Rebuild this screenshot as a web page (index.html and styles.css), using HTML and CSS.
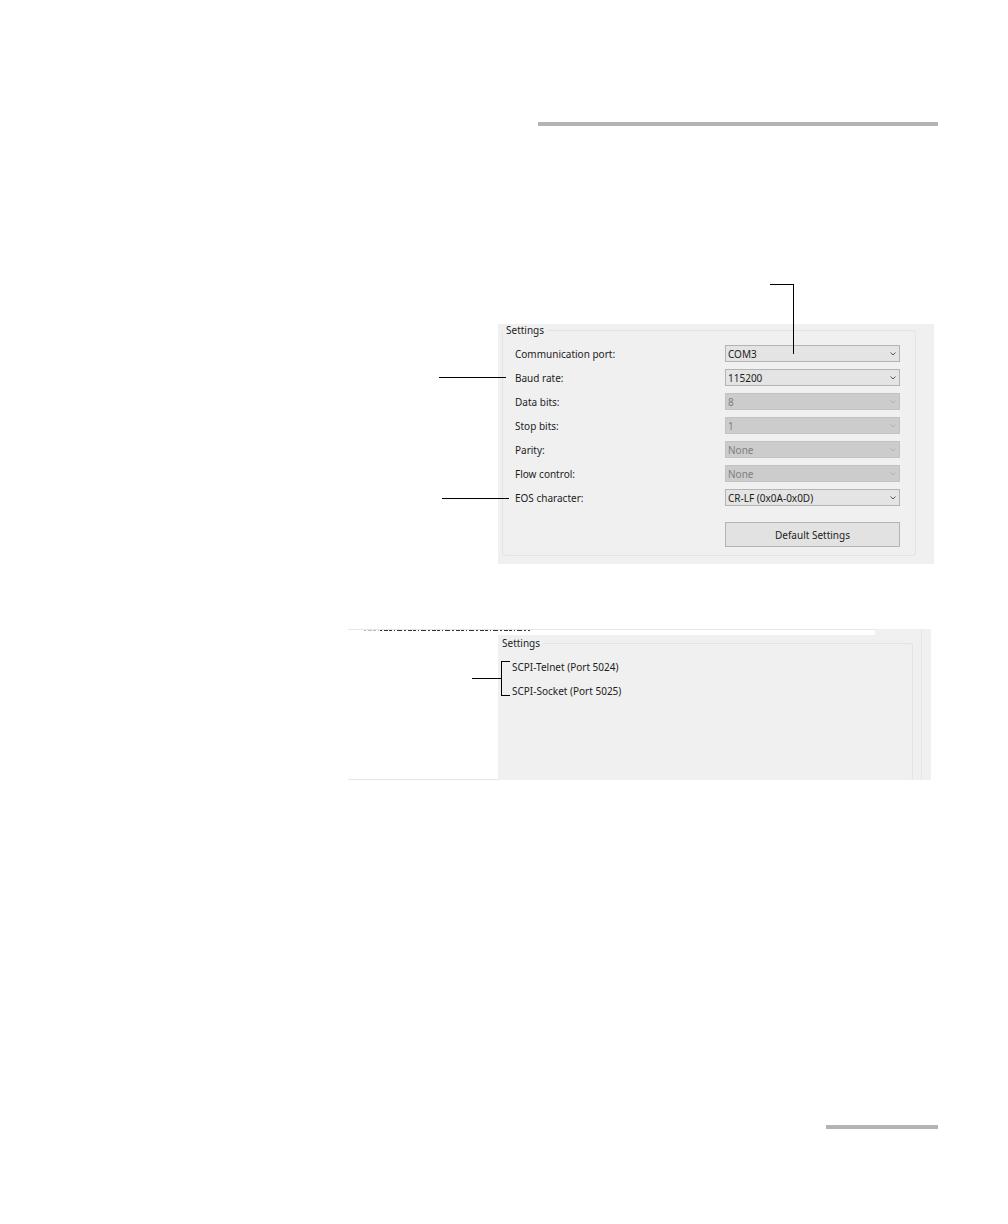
FILE: index.html
```
<!DOCTYPE html>
<html lang="en">
<head>
<meta charset="utf-8">
<title>Communication Settings</title>
<link rel="stylesheet" href="styles.css">
</head>
<body>

<div class="page">

<div class="rule rule-top"></div>

<!-- Serial port settings -->
<form class="panel serial">
    <fieldset class="group">
        <legend>Settings</legend>
        <div class="fields">
            <label for="port">Communication port:</label>
            <div class="combo">
                <select id="port"><option>COM3</option></select>
                <svg class="chevron" viewBox="0 0 6 4"><path d="M0.5 0.5 L3 3 L5.5 0.5"/></svg>
            </div>

            <label for="baud">Baud rate:</label>
            <div class="combo">
                <select id="baud"><option>115200</option></select>
                <svg class="chevron" viewBox="0 0 6 4"><path d="M0.5 0.5 L3 3 L5.5 0.5"/></svg>
            </div>

            <label for="data-bits">Data bits:</label>
            <div class="combo">
                <select id="data-bits" disabled><option>8</option></select>
                <svg class="chevron" viewBox="0 0 6 4"><path d="M0.5 0.5 L3 3 L5.5 0.5"/></svg>
            </div>

            <label for="stop-bits">Stop bits:</label>
            <div class="combo">
                <select id="stop-bits" disabled><option>1</option></select>
                <svg class="chevron" viewBox="0 0 6 4"><path d="M0.5 0.5 L3 3 L5.5 0.5"/></svg>
            </div>

            <label for="parity">Parity:</label>
            <div class="combo">
                <select id="parity" disabled><option>None</option></select>
                <svg class="chevron" viewBox="0 0 6 4"><path d="M0.5 0.5 L3 3 L5.5 0.5"/></svg>
            </div>

            <label for="flow">Flow control:</label>
            <div class="combo">
                <select id="flow" disabled><option>None</option></select>
                <svg class="chevron" viewBox="0 0 6 4"><path d="M0.5 0.5 L3 3 L5.5 0.5"/></svg>
            </div>

            <label for="eos">EOS character:</label>
            <div class="combo">
                <select id="eos"><option>CR-LF (0x0A-0x0D)</option></select>
                <svg class="chevron" viewBox="0 0 6 4"><path d="M0.5 0.5 L3 3 L5.5 0.5"/></svg>
            </div>

            <button type="button" class="defaults">Default Settings</button>
        </div>
    </fieldset>

    <!-- Callout lines -->
    <div class="line line-port"></div>
    <div class="line line-baud"></div>
    <div class="line line-eos"></div>
</form>

<!-- Network settings -->
<div class="network">
    <div class="list-edge">
        <!-- bottom edge of the cut-off list row -->
        <svg class="cut-row" viewBox="0 0 166 2">
            <path class="faint" d="M0 0.5 H18"/>
            <path d="M16 0.5 H166"/>
        </svg>
    </div>
    <div class="network-body">
        <div class="list-blank"></div>
        <fieldset class="group">
            <legend>Settings</legend>
            <p>SCPI-Telnet (Port 5024)</p>
            <p>SCPI-Socket (Port 5025)</p>
        </fieldset>
    </div>
    <div class="line line-ports"></div>
    <div class="line bracket"></div>
</div>

<div class="rule rule-bottom"></div>

</div>

</body>
</html>
```

FILE: styles.css
```
* {
    box-sizing: border-box;
}

body {
    margin: 0;
    background-color: #ffffff;
    color: #1c1c1c;
    font-family: "Noto Sans", Tahoma, sans-serif;
    font-size: 10px;
    line-height: 14px;
}

.page {
    display: flex;
    flex-direction: column;
    min-height: 100vh;
    padding: 122px 70px 95px;
}

.rule {
    height: 4px;
    background-color: #b3b3b3;
    align-self: flex-end;
}

.rule-top {
    width: 400px;
}

.rule-bottom {
    width: 112px;
    margin-top: auto;
}

/* Serial panel */
.panel {
    position: relative;
    margin: 198px 4px 0 428px;
    padding: 0 18px 8px 4px;
    background-color: #f0f0f0;
}

.group {
    min-width: 0;
    margin: 0;
    padding: 0;
    border: 1px solid #e3e3e3;
    border-radius: 3px;
}

legend {
    padding: 0 3px;
    line-height: 12px;
}

.serial .group {
    padding: 9px 15px 8px 12px;
}

.serial legend {
    margin-left: -12px;
}

.fields {
    display: grid;
    grid-template-columns: 1fr 175px;
    row-gap: 7px;
    align-items: center;
}

.combo {
    position: relative;
    height: 17px;
}

select {
    display: block;
    width: 100%;
    height: 17px;
    padding: 0 2px;
    appearance: none;
    background-color: #e4e4e4;
    border: 1px solid #b4b4b4;
    border-radius: 0;
    color: #1c1c1c;
    font: inherit;
}

select:disabled {
    background-color: #cccccc;
    border-color: #c2c2c2;
    color: #808080;
    opacity: 1;
}

.chevron {
    position: absolute;
    top: 7px;
    right: 4px;
    width: 6px;
    height: 4px;
    fill: none;
    stroke: #555555;
    pointer-events: none;
}

select:disabled + .chevron {
    stroke: #b0b0b0;
}

.defaults {
    grid-column: 2;
    height: 25px;
    margin-top: 9px;
    background-color: #e2e2e2;
    border: 1px solid #b4b4b4;
    color: #1c1c1c;
    font: inherit;
}

/* Network panel */
.network {
    position: relative;
    margin: 65px 7px 0 278px;
    background-color: #f0f0f0;
}

.network::after {
    content: "";
    position: absolute;
    top: 0;
    right: 9px;
    bottom: 0;
    border-right: 1px solid #e6e6e6;
}

.list-edge {
    height: 6px;
    margin-right: 56px;
    border-top: 1px solid #e6e6e6;
    background-color: #ffffff;
}

.cut-row {
    display: block;
    width: 166px;
    height: 2px;
    margin-left: 16px;
    fill: none;
    stroke: #333333;
    stroke-dasharray: 2 2 4 1 3 2 1 2 5 2;
}

.cut-row .faint {
    stroke: #bbbbbb;
}

.network-body {
    display: flex;
    height: 145px;
    padding-right: 18px;
}

.list-blank {
    width: 150px;
    border-bottom: 1px solid #e6e6e6;
    background-color: #ffffff;
}

.network .group {
    flex: 1;
    margin-top: 2px;
    border-width: 1px 1px 0 0;
    padding: 11px 14px 0;
}

.network legend {
    margin-left: -13px;
}

.network p {
    margin: 0 0 10px;
}

/* Callouts */
.line {
    position: absolute;
    border: 0 solid #000000;
}

.line-port {
    top: -40px;
    left: 272px;
    width: 24px;
    height: 70px;
    border-width: 1px 1px 0 0;
}

.line-baud {
    top: 53px;
    left: -59px;
    width: 67px;
    border-top-width: 1px;
}

.line-eos {
    top: 174px;
    left: -56px;
    width: 67px;
    border-top-width: 1px;
}

.line-ports {
    top: 49px;
    left: 124px;
    width: 30px;
    border-top-width: 1px;
}

.bracket {
    top: 32px;
    left: 153px;
    width: 9px;
    height: 35px;
    border-width: 1px 0 1px 1px;
}
```
